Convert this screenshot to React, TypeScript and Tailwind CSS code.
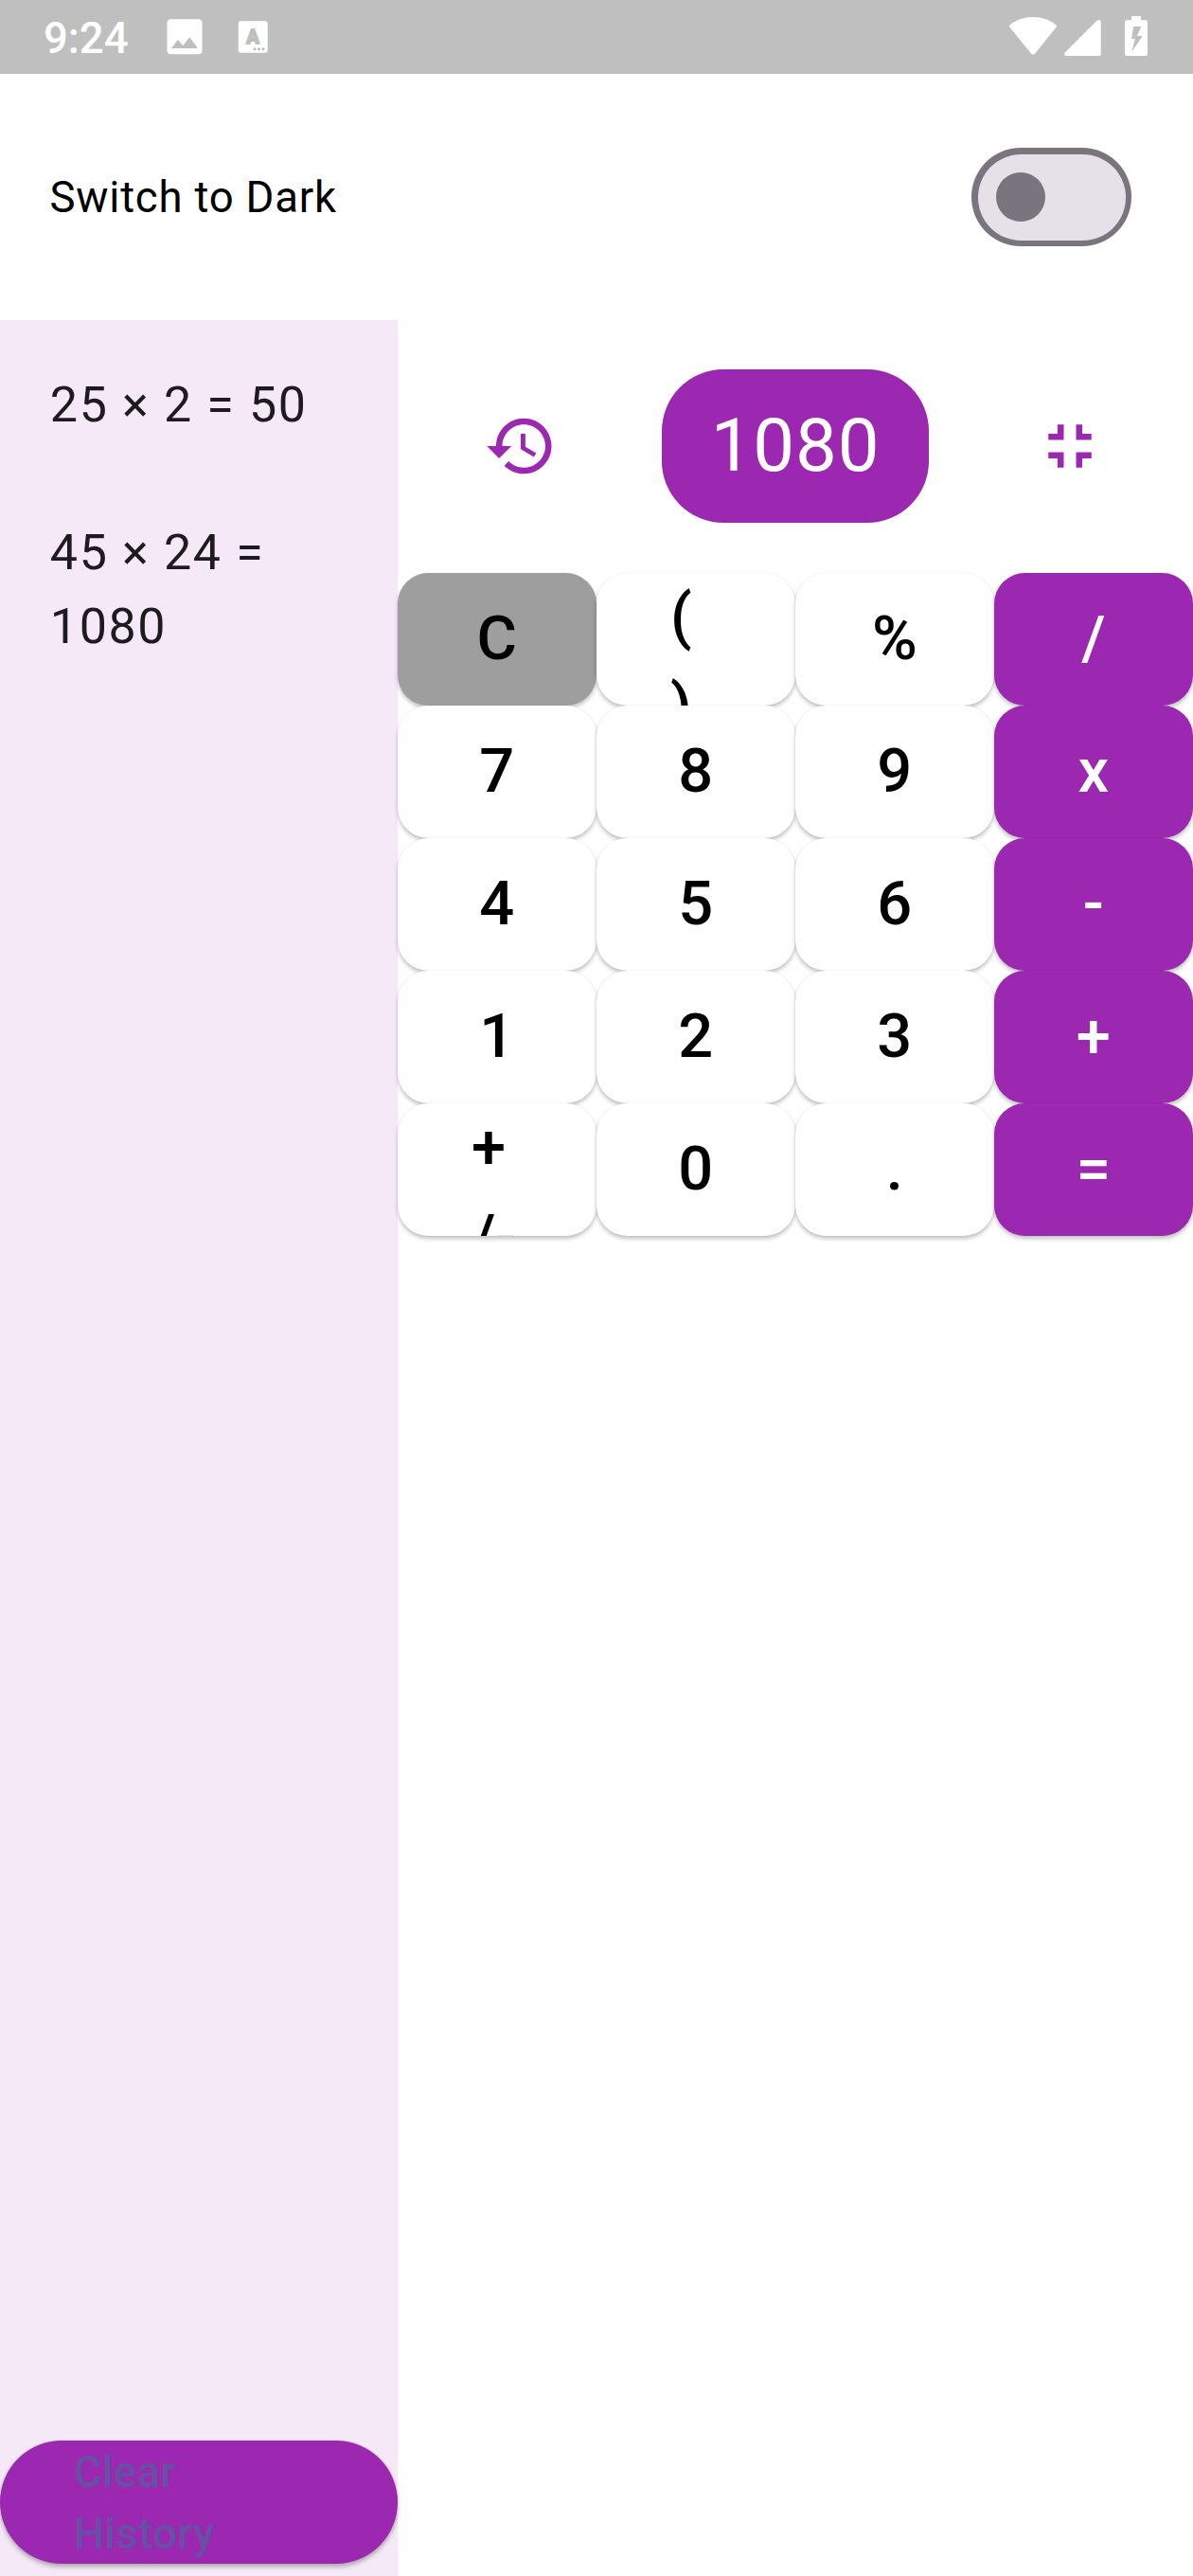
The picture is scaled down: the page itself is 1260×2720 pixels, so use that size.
type KeyTone = "plain" | "clear" | "operator";

const keys: { label: string; tone: KeyTone; lines?: string[] }[] = [
  { label: "C", tone: "clear" },
  { label: "()", tone: "plain", lines: ["(", ")"] },
  { label: "%", tone: "plain" },
  { label: "/", tone: "operator" },
  { label: "7", tone: "plain" },
  { label: "8", tone: "plain" },
  { label: "9", tone: "plain" },
  { label: "x", tone: "operator" },
  { label: "4", tone: "plain" },
  { label: "5", tone: "plain" },
  { label: "6", tone: "plain" },
  { label: "-", tone: "operator" },
  { label: "1", tone: "plain" },
  { label: "2", tone: "plain" },
  { label: "3", tone: "plain" },
  { label: "+", tone: "operator" },
  { label: "+/-", tone: "plain", lines: ["+", "/-"] },
  { label: "0", tone: "plain" },
  { label: ".", tone: "plain" },
  { label: "=", tone: "operator" },
];

const tones: Record<KeyTone, string> = {
  plain: "bg-white text-black",
  clear: "bg-[#9e9e9e] text-black",
  operator: "bg-[#9c27b0] text-white",
};

function StatusBar() {
  return (
    <div className="flex h-[78px] items-start bg-[#bfbfbf] pl-[46px] pr-12 text-white">
      <span className="mt-[13px] w-[130px] text-[45.5px] font-medium leading-[56px]">9:24</span>
      <svg className="mt-5 h-[38px] w-[38px]" viewBox="0 0 38 38">
        <path
          fill="currentColor"
          fillRule="evenodd"
          d="M4.5.3h29a4 4 0 0 1 4 4v29a4 4 0 0 1-4 4h-29a4 4 0 0 1-4-4v-29a4 4 0 0 1 4-4zM5 31h28L24.2 19.3l-7 9-5.300-6.200z"
        />
      </svg>
      <svg className="ml-[37px] mt-[22px] h-[34px] w-[32px]" viewBox="0 0 32 34">
        <rect x="0.700" y="0.300" width="31" height="33.400" rx="3" fill="currentColor" />
        <text
          x="16"
          y="23.800"
          textAnchor="middle"
          fontSize="20"
          fontWeight="700"
          fill="#bfbfbf"
          stroke="#bfbfbf"
          strokeWidth="2"
          strokeLinejoin="round"
        >
          A
        </text>
        <g fill="#bfbfbf">
          <circle cx="18" cy="29.800" r="1.600" />
          <circle cx="22.500" cy="29.800" r="1.600" />
          <circle cx="27" cy="29.800" r="1.600" />
        </g>
      </svg>
      <div className="ml-auto flex items-start">
        <svg className="mt-[17px] h-[42px] w-[50px]" viewBox="0 0 50 42">
          <path
            fill="currentColor"
            d="M.8 9.200C7.500 3.900 15.800 1 25 1s17.500 2.900 24.200 8.200c.9.700 1 1.600.3 2.500L27.200 39.600c-1.200 1.500-3 1.500-4.200 0L.5 11.700c-.7-.9-.6-1.800.3-2.500z"
          />
        </svg>
        <svg className="ml-[7.500px] mt-[21px] h-[38px] w-[39px]" viewBox="0 0 39 38">
          <path
            fill="currentColor"
            d="M.7 34.500 34.700.6c1.500-1.300 4-.5 4 1.500v34.400c0 1-.5 1.500-1.500 1.500H2C.3 38-.4 35.800.7 34.500z"
          />
        </svg>
        <svg className="ml-[25.500px] mt-[17px] h-[42px] w-[24px]" viewBox="0 0 24 42">
          <path
            fill="currentColor"
            d="M7 0h10v4.300h5a2 2 0 0 1 2 2V40a2 2 0 0 1-2 2H2a2 2 0 0 1-2-2V6.300a2 2 0 0 1 2-2h5z"
          />
          <path fill="#bfbfbf" d="M9 11h8.300l-4.500 10h5.900L7.200 38l3.700-14H7z" />
        </svg>
      </div>
    </div>
  );
}

function ThemeRow() {
  return (
    <div className="flex h-[260px] items-center justify-between pl-[52.5px] pr-[65px]">
      <span className="text-[45.5px] leading-[65px] tracking-[0.8px] text-black">Switch to Dark</span>
      <button className="h-[104px] w-[169px] rounded-full bg-[#79747e] p-[6.5px]" aria-label="Dark theme">
        <span className="flex h-full w-full items-center rounded-full bg-[#e6e0e9] pl-[19.5px]">
          <span className="h-[52px] w-[52px] rounded-full bg-[#79747e]" />
        </span>
      </button>
    </div>
  );
}

function HistoryPanel() {
  return (
    <aside className="flex w-[420px] flex-col bg-[#f5e9f7] pb-[13px] pt-[50.5px]">
      <div className="flex flex-1 flex-col gap-[78px] pl-[52.8px] pr-[51px] text-[52px] leading-[78px] tracking-[1.625px] text-[#1d1b20]">
        <p>25 × 2 = 50</p>
        <p>45 × 24 = 1080</p>
      </div>
      <button className="flex h-[130px] items-start rounded-full bg-[#9c27b0] px-[78px] pt-px text-left text-[45.5px] font-medium leading-[65px] tracking-[0.325px] text-[#6750a4] shadow-[0_3px_5px_rgba(0,0,0,0.3),0_0_2px_rgba(0,0,0,0.08)]">
        <span>
          Clear
          <br />
          History
        </span>
      </button>
    </aside>
  );
}

function DisplayRow() {
  return (
    <div className="flex h-[267px] items-center justify-between px-[52.4px] pb-[0.75px] text-[#9c27b0]">
      <button className="flex h-[156px] w-[156px] items-center justify-center" aria-label="History">
        <svg className="h-[78px] w-[78px]" viewBox="0 0 24 24" fill="currentColor">
          <path d="M13 3c-4.970 0-9 4.030-9 9H1l3.890 3.890.070.140L9 12H6c0-3.870 3.130-7 7-7s7 3.130 7 7-3.130 7-7 7c-1.930 0-3.680-.790-4.940-2.060l-1.420 1.420C8.270 19.990 10.510 21 13 21c4.970 0 9-4.030 9-9s-4.030-9-9-9zm-1 5v5l4.280 2.540.720-1.210-3.500-2.080V8H12z" />
        </svg>
      </button>
      <div className="flex h-[162.5px] items-center rounded-[65px] bg-[#9c27b0] px-[52px] pb-[0.5px] text-[78px] leading-[96px] tracking-[0.8px] text-white">
        1080
      </div>
      <button className="flex h-[156px] w-[156px] items-center justify-center" aria-label="Exit fullscreen">
        <svg className="h-[78px] w-[78px]" viewBox="0 0 24 24" fill="currentColor">
          <path d="M5 16h3v3h2v-5H5v2zm3-8H5v2h5V5H8v3zm6 11h2v-3h3v-2h-5v5zm2-11V5h-2v5h5V8h-3z" />
        </svg>
      </button>
    </div>
  );
}

function Keypad() {
  return (
    <div className="grid grid-cols-4">
      {keys.map(({ label, tone, lines }) => (
        <button
          key={label}
          aria-label={label}
          className={`${tones[tone]} h-[140px] rounded-[32.5px] text-[65px] font-medium leading-[94.25px] tracking-[0.325px] shadow-[0_3px_4px_rgba(0,0,0,0.24),0_0_2px_rgba(0,0,0,0.07)]`}
        >
          {lines ? (
            <span className="flex h-full flex-col items-start overflow-hidden pl-[78px]">
              {lines.map((line) => (
                <span key={line} className="block shrink-0 first:-mt-px last:mt-px">
                  {line}
                </span>
              ))}
            </span>
          ) : (
            <span className="flex h-full items-center justify-center pb-[2px]">{label}</span>
          )}
        </button>
      ))}
    </div>
  );
}

export default function App() {
  return (
    <div className="flex h-[2720px] w-[1260px] flex-col overflow-hidden bg-white font-['Roboto',sans-serif]">
      <StatusBar />
      <ThemeRow />
      <main className="flex flex-1">
        <HistoryPanel />
        <section className="w-[840px]">
          <DisplayRow />
          <Keypad />
        </section>
      </main>
    </div>
  );
}
